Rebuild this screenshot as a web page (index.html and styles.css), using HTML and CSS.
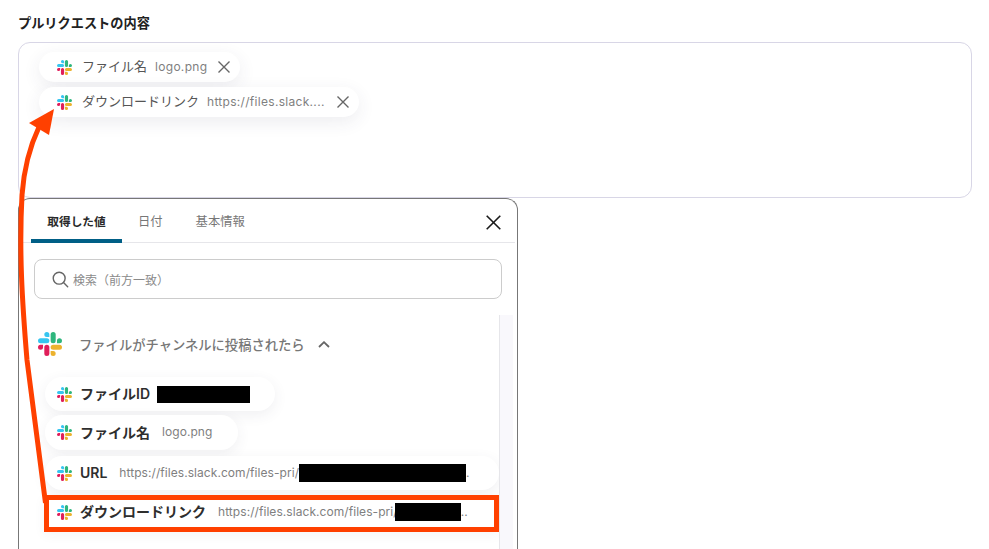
FILE: index.html
```html
<!DOCTYPE html>
<html lang="ja">
<head>
<meta charset="utf-8">
<title>プルリクエストの内容</title>
<link rel="stylesheet" href="styles.css">
</head>
<body>
<svg class="defs" width="0" height="0" aria-hidden="true">
  <symbol id="slack" viewBox="0 0 24 24">
    <path fill="#E01E5A" d="M5.042 15.165a2.528 2.528 0 0 1-2.52 2.523A2.528 2.528 0 0 1 0 15.165a2.527 2.527 0 0 1 2.522-2.52h2.52v2.52zM6.313 15.165a2.527 2.527 0 0 1 2.521-2.52 2.527 2.527 0 0 1 2.521 2.52v6.313A2.528 2.528 0 0 1 8.834 24a2.528 2.528 0 0 1-2.521-2.522v-6.313z"/>
    <path fill="#36C5F0" d="M8.834 5.042a2.528 2.528 0 0 1-2.521-2.52A2.528 2.528 0 0 1 8.834 0a2.528 2.528 0 0 1 2.521 2.522v2.52H8.834zM8.834 6.313a2.528 2.528 0 0 1 2.521 2.521 2.528 2.528 0 0 1-2.521 2.521H2.522A2.528 2.528 0 0 1 0 8.834a2.528 2.528 0 0 1 2.522-2.521h6.312z"/>
    <path fill="#2EB67D" d="M18.956 8.834a2.528 2.528 0 0 1 2.522-2.521A2.528 2.528 0 0 1 24 8.834a2.528 2.528 0 0 1-2.522 2.521h-2.522V8.834zM17.688 8.834a2.528 2.528 0 0 1-2.523 2.521 2.527 2.527 0 0 1-2.52-2.521V2.522A2.527 2.527 0 0 1 15.165 0a2.528 2.528 0 0 1 2.523 2.522v6.312z"/>
    <path fill="#ECB22E" d="M15.165 18.956a2.528 2.528 0 0 1 2.523 2.522A2.528 2.528 0 0 1 15.165 24a2.527 2.527 0 0 1-2.52-2.522v-2.522h2.52zM15.165 17.688a2.527 2.527 0 0 1-2.52-2.523 2.526 2.526 0 0 1 2.52-2.52h6.313A2.527 2.527 0 0 1 24 15.165a2.528 2.528 0 0 1-2.522 2.523h-6.313z"/>
  </symbol>
</svg>

<main class="page">
  <h1 class="field-label">プルリクエストの内容</h1>
  <section class="field">
    <div class="chip chip-a">
      <svg class="slack-sm"><use href="#slack"/></svg>
      <span class="chip-name">ファイル名</span>
      <span class="chip-value">logo.png</span>
      <svg class="chip-x" viewBox="0 0 12 12"><path d="M0.5 0.5 11.5 11.5M11.5 0.5 0.5 11.5"/></svg>
    </div>
    <div class="chip chip-b">
      <svg class="slack-sm"><use href="#slack"/></svg>
      <span class="chip-name">ダウンロードリンク</span>
      <span class="chip-value">https://files.slack....</span>
      <svg class="chip-x" viewBox="0 0 12 12"><path d="M0.5 0.5 11.5 11.5M11.5 0.5 0.5 11.5"/></svg>
    </div>
  </section>

  <section class="panel">
    <header class="tabs">
      <span class="tab tab-active">取得した値</span>
      <span class="tab tab-date">日付</span>
      <span class="tab tab-info">基本情報</span>
      <svg class="panel-close" viewBox="0 0 15 15"><path d="M0.7 0.7 14.3 14.3M14.3 0.7 0.7 14.3"/></svg>
    </header>
    <div class="search">
      <svg class="search-icon" viewBox="0 0 18 18"><circle cx="7.6" cy="7.6" r="6.3"/><path d="M12.2 12.2 16.6 16.6"/></svg>
      <span class="search-text">検索（前方一致）</span>
    </div>
    <div class="list-wrap">
      <div class="list">
        <div class="group">
          <svg class="slack-lg"><use href="#slack"/></svg>
          <span class="group-title">ファイルがチャンネルに投稿されたら</span>
          <svg class="chevron" viewBox="0 0 12 7"><path d="M1 6 6 1.2 11 6"/></svg>
        </div>
        <div class="row row-id">
          <svg class="slack-sm"><use href="#slack"/></svg>
          <span class="row-name">ファイルID</span>
          <span class="redact redact-id"></span>
        </div>
        <div class="row row-file">
          <svg class="slack-sm"><use href="#slack"/></svg>
          <span class="row-name">ファイル名</span>
          <span class="row-value">logo.png</span>
        </div>
        <div class="row row-url">
          <svg class="slack-sm"><use href="#slack"/></svg>
          <span class="row-name">URL</span>
          <span class="row-value">https://files.slack.com/files-pri/</span><span class="redact redact-url"></span><span class="row-value">.</span>
        </div>
        <div class="row row-dl">
          <svg class="slack-sm"><use href="#slack"/></svg>
          <span class="row-name">ダウンロードリンク</span>
          <span class="row-value">https://files.slack.com/files-pri/</span><span class="redact redact-dl"></span><span class="row-value">..</span>
        </div>
      </div>
      <div class="scroll-track"></div>
    </div>
  </section>
</main>

<svg class="arrow" viewBox="0 0 989 549" aria-hidden="true">
  <path class="arrow-shaft" d="M45.5 503 L27 360 C22 300 19 250 22 195 C24 168 30 146 39 127"/>
  <polygon class="arrow-head" points="54,109 29,123 49,135"/>
</svg>
</body>
</html>
```

FILE: styles.css
```css
* { box-sizing: border-box; }

html, body {
  margin: 0;
  height: 549px;
  overflow: hidden;
  background: #fff;
}

body {
  position: relative;
  font-family: Inter, "Noto Sans CJK JP", sans-serif;
}

.defs { position: absolute; }

.page {
  height: 549px;
  overflow: hidden;
  padding: 14px 17px 0 18px;
}

.field-label {
  margin: 0 0 9px;
  height: 19px;
  font-size: 13.2px;
  line-height: 19px;
  font-weight: 600;
  color: #222;
}

.field {
  height: 156px;
  border: 1px solid #d8d6e6;
  border-radius: 12px;
  padding: 9px 20px 0;
  display: flex;
  flex-direction: column;
  align-items: flex-start;
  gap: 5px;
}

.chip {
  height: 30px;
  display: flex;
  align-items: center;
  padding-left: 18px;
  border-radius: 15px;
  background: #fff;
  box-shadow: 0 5px 18px rgba(60, 60, 90, 0.09);
}

.chip-a { width: 201px; }
.chip-b { width: 320px; }

.slack-sm { width: 15px; height: 15px; flex: none; }
.slack-lg { width: 24px; height: 24px; flex: none; }

.chip-name {
  margin-left: 10px;
  padding-bottom: 3px;
  font-size: 13px;
  color: #555;
}

.chip-value {
  margin-left: 8px;
  padding-bottom: 2px;
  font-size: 12px;
  letter-spacing: 0.3px;
  color: #7f7f7f;
  white-space: nowrap;
}

.chip-x {
  width: 12px;
  height: 12px;
  margin-left: 11px;
  flex: none;
  fill: none;
  stroke: #666;
  stroke-width: 1.4;
}

.chip-b .chip-x { margin-left: 12px; }

.panel {
  width: 500px;
  height: 400px;
  border: 1px solid #777;
  border-bottom: 0;
  border-radius: 12px 12px 0 0;
  background: #fff;
}

.tabs {
  position: relative;
  height: 44px;
  display: flex;
  align-items: flex-start;
  margin-right: 2px;
  border-bottom: 1px solid #e6e6ea;
}

.tab {
  height: 44px;
  padding-top: 14px;
  font-size: 12.3px;
  line-height: 18px;
  color: #777;
}

.tab-active {
  width: 91px;
  margin-left: 12px;
  text-align: center;
  font-size: 11.7px;
  font-weight: 600;
  color: #2a2a2a;
  border-bottom: 4px solid #005f86;
  border-radius: 4px 4px 0 0;
}

.tab-date { margin-left: 16px; }
.tab-info { margin-left: 33px; }

.panel-close {
  width: 15px;
  height: 15px;
  margin-left: auto;
  margin-top: 16px;
  margin-right: 14px;
  fill: none;
  stroke: #1a1a1a;
  stroke-width: 1.6;
}

.search {
  height: 40px;
  margin: 16px 15px 0;
  padding-left: 17px;
  display: flex;
  align-items: center;
  border: 1px solid #ccc;
  border-radius: 8px;
}

.search-icon {
  width: 17px;
  height: 17px;
  flex: none;
  fill: none;
  stroke: #666;
  stroke-width: 1.5;
  stroke-linecap: round;
}

.search-text {
  margin-left: 4px;
  font-size: 12px;
  color: #8a8a8a;
}

.list-wrap {
  height: 234px;
  margin-top: 16px;
  display: flex;
}

.list {
  width: 480px;
  flex: none;
  padding-left: 19px;
}

.scroll-track {
  width: 14px;
  flex: none;
  background: #f9f8fc;
  border-left: 1px solid #e6e6ea;
}

.group {
  height: 58px;
  display: flex;
  align-items: center;
}

.group-title {
  margin-left: 17px;
  font-size: 13.3px;
  font-weight: 500;
  color: #777;
  white-space: nowrap;
}

.chevron {
  width: 12px;
  height: 7px;
  margin-left: 13px;
  flex: none;
  fill: none;
  stroke: #666;
  stroke-width: 1.8;
}

.row {
  display: flex;
  align-items: center;
  height: 34px;
  margin-left: 7px;
  padding-left: 12px;
  border-radius: 17px;
  background: #fff;
  box-shadow: 0 4px 14px rgba(60, 60, 90, 0.08);
}

.row-id { width: 230px; margin-top: 4px; }
.row-file { width: 193px; margin-top: 4px; height: 35px; }
.row-url { width: 454px; margin-top: 6px; }

.row-dl {
  width: 455px;
  height: 37px;
  margin-top: 5px;
  margin-left: 6px;
  padding-left: 8px;
  padding-bottom: 3px;
  border: 5px solid #ff4000;
  border-radius: 0;
  box-shadow: 0 3px 12px rgba(60, 60, 90, 0.05);
}

.row-name {
  margin-left: 8px;
  padding-bottom: 2px;
  font-size: 14px;
  font-weight: 600;
  color: #2e2e2e;
  white-space: nowrap;
}

.row-value {
  padding-bottom: 2px;
  font-size: 12px;
  letter-spacing: 0.06px;
  color: #808080;
  white-space: nowrap;
}

.row-name + .row-value { margin-left: 12px; }

.redact {
  display: block;
  flex: none;
  background: #000;
}

.redact-id { width: 93px; height: 17px; margin-left: 7px; }
.redact-url { width: 167px; height: 18px; }
.redact-dl { width: 66px; height: 18px; margin-left: -3px; }

.arrow {
  position: absolute;
  left: 0;
  top: 0;
  width: 989px;
  height: 549px;
  pointer-events: none;
}

.arrow-shaft {
  fill: none;
  stroke: #ff4000;
  stroke-width: 5;
}

.arrow-head { fill: #ff4000; }
```
